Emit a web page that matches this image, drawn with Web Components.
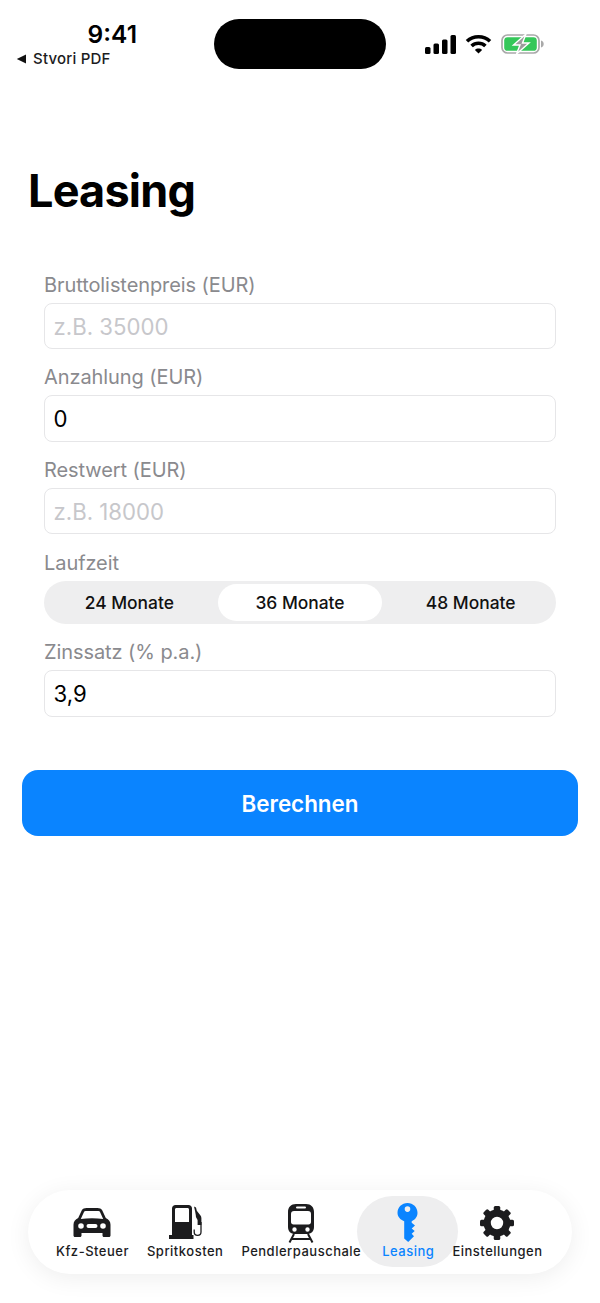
<!DOCTYPE html>
<html lang="de">
<head>
<meta charset="utf-8">
<title>Leasing</title>
<style>
  html, body { margin: 0; padding: 0; background: #fff; }
  body { font-family: Inter, "Liberation Sans", sans-serif; }
</style>
</head>
<body>
<app-screen>
  <status-bar></status-bar>
  <h1 slot="title">Leasing</h1>
  <form-field label="Bruttolistenpreis (EUR)" placeholder="z.B. 35000"></form-field>
  <form-field label="Anzahlung (EUR)" value="0"></form-field>
  <form-field label="Restwert (EUR)" placeholder="z.B. 18000"></form-field>
  <period-picker label="Laufzeit"></period-picker>
  <form-field label="Zinssatz (% p.a.)" value="3,9"></form-field>
  <primary-button slot="action">Berechnen</primary-button>
  <tab-bar slot="tabs"></tab-bar>
</app-screen>

<script>
class AppScreen extends HTMLElement {
  constructor() {
    super();
    this.attachShadow({ mode: "open" });
    this.shadowRoot.innerHTML = `
      <style>
        :host { display: flex; flex-direction: column; width: 600px; height: 1303px; overflow: hidden; background: #fff; }
        #title { display: block; padding: 75px 28px 0; }
        ::slotted(h1) { margin: 0; font-size: 45px; line-height: 56px; font-weight: 700; letter-spacing: -0.8px; color: #000; }
        #form { display: flex; flex-direction: column; padding: 0 44px; margin-top: 51.5px; }
        #action { display: block; padding: 0 22px; margin-top: 39.5px; }
        #tabs { display: block; margin-top: auto; padding: 0 28px 29px; }
      </style>
      <slot name="status"></slot>
      <slot></slot>
      <div id="title"><slot name="title"></slot></div>
      <div id="form"><slot name="form"></slot></div>
      <div id="action"><slot name="action"></slot></div>
      <div id="tabs"><slot name="tabs"></slot></div>
    `;
  }
  connectedCallback() {
    // everything without its own slot attribute goes in the form, the bar goes on top
    for (const el of Array.from(this.children)) {
      if (el.tagName === "STATUS-BAR") el.slot = "status";
      else if (!el.slot) el.slot = "form";
    }
  }
}

class StatusBar extends HTMLElement {
  constructor() {
    super();
    this.attachShadow({ mode: "open" });
    this.shadowRoot.innerHTML = `
      <style>
        :host { display: grid; grid-template-columns: 214px 172px 1fr; height: 69px; padding-top: 19px; color: #000; }
        #left { display: flex; flex-direction: column; align-items: flex-end; }
        #time { font-size: 24.5px; line-height: 30px; font-weight: 600; margin-right: 77px; }
        #back { display: flex; align-items: center; gap: 6px; align-self: flex-start; padding-left: 16px; font-size: 15px; line-height: 20px; font-weight: 500; letter-spacing: 0.2px; color: #1c1c1e; }
        #island { background: #000; border-radius: 25px; height: 50px; }
        #icons { display: flex; align-items: center; gap: 9px; padding-left: 39px; height: 50px; }
      </style>
      <div id="left">
        <span id="time">9:41</span>
        <span id="back">
          <svg width="11" height="10" viewBox="0 0 11 10"><path d="M10 .5v9L.8 5z" fill="#111"/></svg>Stvori PDF
        </span>
      </div>
      <div id="island"></div>
      <div id="icons">
        <svg width="31" height="19" viewBox="0 0 31 19" fill="#000">
          <rect x="0" y="12" width="5.5" height="7" rx="1.5"/>
          <rect x="8.5" y="8.5" width="5.5" height="10.5" rx="1.5"/>
          <rect x="17" y="4.5" width="5.5" height="14.5" rx="1.5"/>
          <rect x="25.5" y="0" width="5.5" height="19" rx="1.5"/>
        </svg>
        <svg width="27" height="20" viewBox="0 0 27 20" fill="none" stroke="#000" stroke-width="3.6">
          <path d="M2 7.3C8.4 1.2 18.6 1.2 25 7.3"/>
          <path d="M6.6 12C10.4 8.4 16.6 8.4 20.4 12"/>
          <path d="M13.5 19.6 9.9 15.9c2-1.900 5.200-1.900 7.200 0z" fill="#000" stroke="none"/>
        </svg>
        <svg width="43" height="20" viewBox="0 0 43 20">
          <rect x="1" y="1" width="37" height="18" rx="5.500" fill="#fff" stroke="#a9a9a9" stroke-width="1.700"/>
          <rect x="3.200" y="3.200" width="32.600" height="13.600" rx="3.400" fill="#34c759"/>
          <path d="M40 6.500c1.700.3 2.700 1.700 2.700 3.500s-1 3.200-2.700 3.500z" fill="#a9a9a9"/>
          <path d="M25 0 12.500 11h6.500L15.500 20l12.500-11h-6.500z" fill="#9c9c9c" stroke="#fff" stroke-width="1.400"/>
        </svg>
      </div>
    `;
  }
}

class FormField extends HTMLElement {
  constructor() {
    super();
    this.attachShadow({ mode: "open" });
    const value = this.getAttribute("value");
    const text = value || this.getAttribute("placeholder") || "";
    this.shadowRoot.innerHTML = `
      <style>
        :host { display: block; margin-bottom: 14px; }
        label { display: block; font-size: 20px; line-height: 29px; letter-spacing: -0.08px; color: #8a8a8e; height: 26px; margin-bottom: 6px; }
        #box { box-sizing: border-box; height: 46.500px; border: 1px solid #e6e6e8; border-radius: 8px; padding: 1px 9px 0 8.500px; display: flex; align-items: center; font-size: 22.200px; color: #000; background: #fff; }
        #box.empty { color: #c7c7cb; }
      </style>
      <label></label>
      <div id="box"></div>
    `;
    this.shadowRoot.querySelector("label").textContent = this.getAttribute("label");
    const box = this.shadowRoot.querySelector("#box");
    box.textContent = text;
    if (!value) box.classList.add("empty");
  }
}

class PeriodPicker extends HTMLElement {
  constructor() {
    super();
    this.attachShadow({ mode: "open" });
    this.shadowRoot.innerHTML = `
      <style>
        :host { display: block; margin-top: 2px; margin-bottom: 14px; }
        label { display: block; font-size: 20px; line-height: 26px; letter-spacing: -0.08px; height: 26px; color: #8a8a8e; margin-bottom: 5px; }
        #track { display: grid; grid-template-columns: repeat(3, 1fr); gap: 6px; height: 43px; box-sizing: border-box; padding: 3px; border-radius: 22px; background: #eeeeef; }
        span { display: flex; align-items: center; justify-content: center; border-radius: 19px; font-size: 17.400px; font-weight: 500; color: #111; }
        .on { background: #fff; }
      </style>
      <label></label>
      <div id="track">
        <span>24 Monate</span>
        <span class="on">36 Monate</span>
        <span>48 Monate</span>
      </div>
    `;
    this.shadowRoot.querySelector("label").textContent = this.getAttribute("label");
  }
}

class PrimaryButton extends HTMLElement {
  constructor() {
    super();
    this.attachShadow({ mode: "open" });
    this.shadowRoot.innerHTML = `
      <style>
        :host { display: flex; align-items: center; justify-content: center; height: 66px; border-radius: 16px; background: #0a84ff; color: #fff; font-size: 22.400px; font-weight: 600; }
      </style>
      <slot></slot>
    `;
  }
}

const GEAR_TEETH = [0, 45, 90, 135, 180, 225, 270, 315]
  .map((deg) => `<rect x="14.750" y="1" width="6.500" height="9" rx="1.500" transform="rotate(${deg} 18 18)"/>`)
  .join("");

const ICONS = {
  car: `<svg width="40" height="32" viewBox="0 0 40 32"><path fill-rule="evenodd" fill="#1c1c1e" d="M9.800 3.200C10.600 1.700 12.500 1 14.500 1h11c2 0 3.900.7 4.700 2.200L33.800 11c3 1.300 4.700 3.500 4.700 6.800V28.500c0 .9-.6 1.500-1.500 1.500h-5c-.9 0-1.500-.6-1.500-1.500V26H9.500v2.500c0 .9-.6 1.500-1.500 1.500H3c-.9 0-1.500-.6-1.500-1.500V17.800c0-3.300 1.700-5.500 4.700-6.800zM13.500 4c-.7 0-1.100.3-1.400.8L8.800 12c7-1 15.400-1 22.400 0L27.900 4.800c-.3-.5-.7-.8-1.400-.8zM9 16.200a2.800 2.800 0 1 0 0 5.600 2.800 2.800 0 0 0 0-5.600zM31 16.200a2.800 2.800 0 1 0 0 5.600 2.800 2.800 0 0 0 0-5.600zM16.500 17a2 2 0 0 0 0 4h7a2 2 0 0 0 0-4z"/></svg>`,
  fuel: `<svg width="36" height="36" viewBox="0 0 36 36"><path fill-rule="evenodd" fill="#1c1c1e" d="M5 3.500C5 1.500 6.500 0 8.500 0h13c2 0 3.500 1.500 3.500 3.500V30h1.500v4H2v-4h3zM9.500 3C8.600 3 8 3.600 8 4.500V17h14V4.500C22 3.600 21.400 3 20.500 3z"/><path fill="none" stroke="#1c1c1e" stroke-width="1.300" d="M34 17v10a3.400 3.400 0 0 1-6.800 0v-2.500"/><path fill="#1c1c1e" d="M27 1.500l2 1 .8 3.200 3.700 4.800c.6.800.9 1.700.9 2.700V20h-3.800v-4.500c0-1-.7-1.500-1.300-2.700-.5-1-.4-1.500-.5-2.500-.1-1.200-.9-5-1.800-8.800z"/></svg>`,
  tram: `<svg width="30" height="40" viewBox="0 0 30 40"><path fill-rule="evenodd" fill="#1c1c1e" d="M10 1h10c5 0 8 3 8 8V24c0 4.500-3 7-7 7H9c-4 0-7-2.500-7-7V9c0-5 3-8 8-8zM11 3.500a1 1 0 0 0 0 2h8a1 1 0 0 0 0-2zM8 8C6 8 5 9 5 11v8c0 1.500 1 2.500 2.500 2.500h15c1.500 0 2.500-1 2.500-2.500v-8c0-2-1-3-3-3zM8.500 24.300a2.200 2.200 0 1 0 0 4.400 2.200 2.200 0 0 0 0-4.400zM21.500 24.300a2.200 2.200 0 1 0 0 4.400 2.200 2.200 0 0 0 0-4.400z"/><path fill="none" stroke="#1c1c1e" stroke-width="2" d="M8 31 3.500 39.500M22 31l4.500 8.500M6 36h18"/></svg>`,
  key: `<svg width="24" height="40" viewBox="0 0 24 40"><path fill-rule="evenodd" fill="#0a84ff" d="M11.500 0c5.600 0 10 4.400 10 9.800 0 3.800-2.300 7-5.800 8.500v1.500l3.300 2.700-3.300 3 3 2.500-3 2.800 2.300 2.500-5.800 5.700-4-3.500V18.300C4.200 16.800 1.500 13.600 1.500 9.800 1.500 4.400 5.900 0 11.500 0zM11.500 3.300a2.800 2.800 0 1 0 0 5.600 2.800 2.800 0 0 0 0-5.600z"/></svg>`,
  gear: `<svg width="36" height="36" viewBox="0 0 36 36" fill="#1c1c1e">${GEAR_TEETH}<circle cx="18" cy="18" r="9.800" fill="none" stroke="#1c1c1e" stroke-width="7.200"/></svg>`
};

class TabItem extends HTMLElement {
  constructor() {
    super();
    this.attachShadow({ mode: "open" });
    this.shadowRoot.innerHTML = `
      <style>
        :host { position: relative; display: flex; flex-direction: column; align-items: center; color: #1c1c1e; }
        :host([active]) { color: #0a84ff; margin-left: 3px; }
        :host([active])::before { content: ""; position: absolute; left: -25px; right: -24px; top: -7px; bottom: -8px; border-radius: 38px; background: #eeeeef; }
        #icon, #text { position: relative; }
        #icon { display: flex; align-items: center; justify-content: center; height: 40px; }
        #text { font-size: 13px; line-height: 16px; font-weight: 500; letter-spacing: 0.5px; white-space: nowrap; }
      </style>
      <div id="icon"></div>
      <div id="text"><slot></slot></div>
    `;
    this.shadowRoot.querySelector("#icon").innerHTML = ICONS[this.getAttribute("icon")];
  }
}

class TabBar extends HTMLElement {
  constructor() {
    super();
    this.attachShadow({ mode: "open" });
    this.shadowRoot.innerHTML = `
      <style>
        :host { display: flex; gap: 18px; align-items: flex-start; box-sizing: border-box; height: 84px; padding: 13px 28px 0; border-radius: 42px; background: #fff; box-shadow: 0 4px 24px rgba(0,0,0,0.07); }
      </style>
      <tab-item icon="car">Kfz-Steuer</tab-item>
      <tab-item icon="fuel">Spritkosten</tab-item>
      <tab-item icon="tram">Pendlerpauschale</tab-item>
      <tab-item icon="key" active>Leasing</tab-item>
      <tab-item icon="gear">Einstellungen</tab-item>
    `;
  }
}

customElements.define("app-screen", AppScreen);
customElements.define("status-bar", StatusBar);
customElements.define("form-field", FormField);
customElements.define("period-picker", PeriodPicker);
customElements.define("primary-button", PrimaryButton);
customElements.define("tab-item", TabItem);
customElements.define("tab-bar", TabBar);
</script>
</body>
</html>
